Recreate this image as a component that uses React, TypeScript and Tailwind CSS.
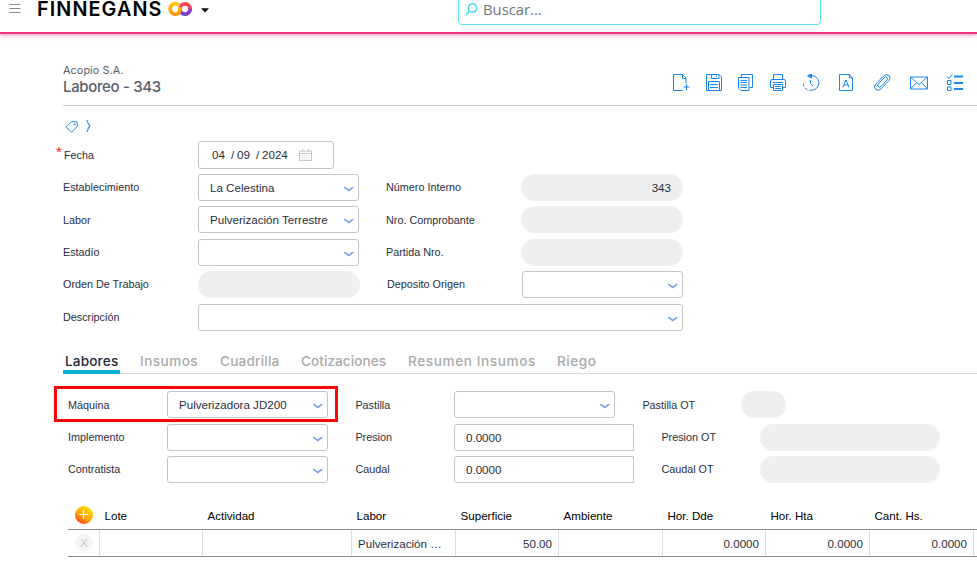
import React from 'react';
import clsx from 'clsx';

interface FieldProps {
  value?: string;
  className?: string;
}

const Chevron: React.FC = () => (
  <svg className="mt-[3px] h-[6px] w-[11px] shrink-0" viewBox="0 0 11 6" fill="none">
    <path d="M1.3 1.2 L5.8 4.4 L10.3 1.2" stroke="#74a3e4" strokeWidth="1.6" />
  </svg>
);

const SelectField: React.FC<FieldProps> = ({ value, className = 'w-[161px]' }) => (
  <div
    className={clsx(
      'flex h-[27px] shrink-0 items-center justify-between rounded-[3px] border border-[#c4c4c4] bg-white pl-[11px] pr-1 text-[11.6px]',
      className
    )}
  >
    <span className="whitespace-nowrap pt-px">{value}</span>
    <Chevron />
  </div>
);

const ReadOnlyField: React.FC<FieldProps> = ({ value, className = 'w-[162px]' }) => (
  <div
    className={clsx(
      'flex h-[27px] shrink-0 items-center justify-end rounded-full bg-[#eeeff1] pr-3 pt-px text-[11.6px]',
      className
    )}
  >
    {value}
  </div>
);

const InputField: React.FC<FieldProps> = ({ value }) => (
  <div className="flex h-[27px] w-[180px] shrink-0 items-center rounded-l-[3px] border border-[#c4c4c4] pl-[11px] pt-px text-[11.6px]">
    {value}
  </div>
);

const Label: React.FC<{ text: string; className?: string }> = ({ text, className }) => (
  <span className={clsx('shrink-0 whitespace-nowrap text-[10.8px]', className)}>{text}</span>
);

const Logo: React.FC = () => (
  <svg className="h-[16px] w-[24px]" viewBox="0 0 24 16" fill="none">
    <defs>
      <linearGradient id="logoWarm" x1="0" y1="0" x2="0" y2="1">
        <stop offset="0" stopColor="#ffc60a" />
        <stop offset="1" stopColor="#ff9408" />
      </linearGradient>
      <linearGradient id="logoCool" x1="0" y1="0" x2="0" y2="1">
        <stop offset="0" stopColor="#ff4a4d" />
        <stop offset="0.4" stopColor="#f0407c" />
        <stop offset="0.65" stopColor="#8b3fc4" />
        <stop offset="1" stopColor="#6f3bd2" />
      </linearGradient>
    </defs>
    <circle cx="17" cy="8" r="5.1" stroke="url(#logoCool)" strokeWidth="3.9" />
    <path
      d="M10.6 3.9 A5.2 5.2 0 1 0 10.6 12 C12 10.8 11.4 8 12.4 6.2"
      stroke="url(#logoWarm)"
      strokeWidth="3.8"
    />
  </svg>
);

const toolbarIcons: { name: string; gap: string; drawing: React.ReactNode }[] = [
  {
    name: 'nuevo',
    gap: 'mr-[15px]',
    drawing: (
      <>
        <path d="M10.5 16.5 H1.5 V.5 H10.5 L14 4 V9" />
        <path d="M10.5 .5 V4.5 H14" />
        <path d="M14.5 10 V16 M11.5 13 H17.5" />
      </>
    ),
  },
  {
    name: 'guardar',
    gap: 'mr-[14px]',
    drawing: (
      <>
        <path d="M1.5 .5 H14 L16.5 3 V16.5 H1.5 Z" />
        <path d="M6.5 .5 V4.5 H14 V.5 M11.5 1.5 V3 M3.5 16.5 V7.5 H14.5 V16.5 M5 10.5 H13 M5 13.5 H13" />
      </>
    ),
  },
  {
    name: 'copiar',
    gap: 'mr-[14px]',
    drawing: (
      <>
        <path d="M1.5 3.5 H12 V16.5 H4 L1.5 14 Z" />
        <path d="M4.5 3 V.5 H15.5 V13.5 H12.5 M3.5 6.5 H10 M3.5 8.5 H10 M3.5 11 H10 M3.5 13.5 H10" />
      </>
    ),
  },
  {
    name: 'imprimir',
    gap: 'mr-[15px]',
    drawing: (
      <>
        <path d="M4.5 5.5 V.5 H13.5 V5.5 M4 13.5 H1.5 V7 Q1.5 5.5 3 5.5 H15 Q16.5 5.5 16.5 7 V13.5 H14" />
        <path d="M4.5 10.5 H13.5 V16.5 H4.5 Z M4 8.5 H14 M6 12.5 H12 M6 14.5 H12" />
      </>
    ),
  },
  {
    name: 'historial',
    gap: 'mr-[18px]',
    drawing: (
      <>
        <path d="M7 1.5 H9 A7.3 7.3 0 0 1 10 16.2" />
        <path d="M10 16.2 A7.3 7.3 0 0 1 1.2 8.5" strokeDasharray="3 1.6" />
        <path d="M9.5 0 V4 L5.5 1.7 Z" fill="#1a86f2" />
        <path d="M8.5 6 V9.5 L11 12" />
      </>
    ),
  },
  {
    name: 'texto',
    gap: 'mr-[17px]',
    drawing: (
      <>
        <path d="M1.5 .5 H11.5 L14.5 4 V16.5 H1.5 Z M11.5 .5 V4 H14.5" />
        <path d="M4.8 13.5 L8 6 L11.2 13.5 M5.8 11 H10.2" />
      </>
    ),
  },
  {
    name: 'adjuntos',
    gap: 'mr-[19px]',
    drawing: (
      <path
        transform="translate(.5 0)"
        d="M13.4 6.2 L7.6 12.4 Q6 13.8 4.7 12.6 Q3.6 11.2 5 9.7 L10.6 3.8 Q12.2 2.6 13.4 3.7 Q14.6 4.9 13.4 6.2 M11.8 10.4 L7.4 15 Q4.7 17.4 2.1 15.4 Q-.3 13 2 10.3 L10.2 1.8 Q13 -.4 15.5 1.5 Q17.7 3.8 15.5 6.6 L11.8 10.4"
      />
    ),
  },
  {
    name: 'correo',
    gap: 'mr-[18px]',
    drawing: (
      <path d="M.5 3 H17.5 V15 H.5 Z M.5 3 L9 10.5 L17.5 3 M.5 15 L6.5 8.5 M17.5 15 L11.5 8.5" />
    ),
  },
  {
    name: 'tareas',
    gap: '',
    drawing: (
      <>
        <path d="M1 2.5 L2.8 4.5 L6.5 .2 M1.5 6.5 H5 V10.5 H1.5 Z M1.5 13 H5 V16.5 H1.5 Z" />
        <path d="M8 2.5 H17 M8 9 H17 M8 15 H17" strokeWidth="1.8" />
      </>
    ),
  },
];

const tabs = [
  { label: 'Labores', width: 'w-[55px]' },
  { label: 'Insumos', width: 'w-[58px] tracking-[0.45px]' },
  { label: 'Cuadrilla', width: 'w-[59px] tracking-[0.2px]' },
  { label: 'Cotizaciones', width: 'w-[85px] tracking-[0.05px]' },
  { label: 'Resumen Insumos', width: 'w-[127px] tracking-[0.6px]' },
  { label: 'Riego', width: 'w-[39px] tracking-[0.5px]' },
];

const columns = [
  { title: 'Lote', value: '', numeric: false },
  { title: 'Actividad', value: '', numeric: false },
  { title: 'Labor', value: 'Pulverización …', numeric: false },
  { title: 'Superficie', value: '50.00', numeric: true },
  { title: 'Ambiente', value: '', numeric: false },
  { title: 'Hor. Dde', value: '0.0000', numeric: true },
  { title: 'Hor. Hta', value: '0.0000', numeric: true },
  { title: 'Cant. Hs.', value: '0.0000', numeric: true },
];

const gridColumns =
  'grid grid-cols-[31px_103px_149px_104px_103px_104px_103px_104px_104px_4px]';

const Header: React.FC = () => (
  <header className="flex h-[34px] shrink-0 border-b-2 border-[#ee327d] shadow-[0_1px_5px_rgba(238,50,125,0.5)]">
    <svg className="ml-[9px] mt-[3px] h-[12px] w-[12px]" viewBox="0 0 12 12" stroke="#8a8a8a">
      <path d="M.5 1.5 H11.5 M.5 5.5 H11.5 M.5 9.5 H11.5" />
    </svg>
    <span className="ml-[16px] w-[131px] whitespace-nowrap font-[Inter] text-[19.8px] font-semibold leading-[18px] tracking-[1.1px] text-black">
      FINNEGANS
    </span>
    <div className="mt-px">
      <Logo />
    </div>
    <svg className="ml-[9px] mt-2 h-[5px] w-[8px]" viewBox="0 0 8 5">
      <path d="M0 .3 H8 L4 4.6 Z" fill="#111" />
    </svg>
    <div className="-mt-3 ml-[249px] flex h-[37px] w-[363px] items-center rounded-[4px] border border-[#5fe2f5] pl-[6px] pt-[4px]">
      <svg className="h-[12px] w-[13px]" viewBox="0 0 13 12" fill="none" stroke="#2ccdea" strokeWidth="1.2">
        <circle cx="7.6" cy="5" r="4.2" />
        <path d="M4.6 8 L1 11.5" />
      </svg>
      <span className="ml-[5px] font-['Open_Sans'] text-[14.8px] leading-5 text-[#6d7680]">Buscar...</span>
    </div>
  </header>
);

const TitleBar: React.FC = () => (
  <div className="ml-[63px] flex h-[72px] justify-between border-b border-[#c9c9c9]">
    <div className="whitespace-nowrap pt-[30px] font-[Inter] text-[#5a5d69]">
      <p className="text-[10.8px] leading-[13px] tracking-[0.1px]">Acopio S.A.</p>
      <h1 className="text-[15px] font-medium leading-[19px] tracking-[-0.35px]">Laboreo - 343</h1>
    </div>
    <div className="flex pr-[13px] pt-[40px]">
      {toolbarIcons.map((icon) => (
        <svg
          key={icon.name}
          className={clsx('h-[17px] w-[18px] shrink-0', icon.gap)}
          viewBox="0 0 18 17"
          fill="none"
          stroke="#1a86f2"
        >
          {icon.drawing}
        </svg>
      ))}
    </div>
  </div>
);

const DateField: React.FC = () => (
  <div className="flex h-[28px] w-[136px] items-center rounded-[3px] border border-[#c4c4c4] pl-[13px] text-[11.6px]">
    <span className="w-[19px]">04</span>
    <span className="w-[6px]">/</span>
    <span className="w-[19px]">09</span>
    <span className="w-[6px]">/</span>
    <span className="w-[37px]">2024</span>
    <svg className="h-[12px] w-[13px]" viewBox="0 0 13 12" fill="none" stroke="#c6c6c6">
      <path d="M.5 2 H12.5 V11.5 H.5 Z M.5 4.5 H12.5 M3.5 0 V3 M9.5 0 V3" />
      <path d="M2.5 6.5 H11 M2.5 8.5 H11 M2.5 10 H11" strokeDasharray="1.2 1" strokeWidth=".8" />
    </svg>
  </div>
);

const FormHeader: React.FC = () => (
  <section className="ml-[63px] w-[620px]">
    <div className="flex h-[35px] gap-[7px] pl-[2px] pt-[14px]">
      <svg className="h-[14px] w-[14px]" viewBox="0 0 14 14" fill="none" stroke="#2b8ef0">
        <path d="M1 7.2 L6.6 1.5 L12 1.8 L12.6 6 L6.8 12.2 Z" />
        <circle cx="9.7" cy="4.4" r=".7" />
      </svg>
      <svg className="-mt-px h-[14px] w-[5px]" viewBox="0 0 5 14" fill="none" stroke="#2b8ef0" strokeWidth="1.2">
        <path d="M1 1 Q1.7 4.5 3.8 7 Q1.7 9.5 1 13" />
      </svg>
    </div>
    <div className="flex h-[33px]">
      <div className="-ml-[7px] flex h-[28px] w-[142px]">
        <span className="w-[8px] pt-[2px] text-[15px] leading-[18px] text-[#f01818]">*</span>
        <Label text="Fecha" className="self-center" />
      </div>
      <DateField />
    </div>
    <div className="flex h-[32px]">
      <Label text="Establecimiento" className="w-[135px] leading-[27px]" />
      <SelectField value="La Celestina" />
      <Label text="Número Interno" className="ml-[27px] w-[135px] leading-[27px]" />
      <ReadOnlyField value="343" />
    </div>
    <div className="flex h-[33px]">
      <Label text="Labor" className="w-[135px] leading-[28px]" />
      <SelectField value="Pulverización Terrestre" />
      <Label text="Nro. Comprobante" className="ml-[27px] w-[135px] leading-[28px]" />
      <ReadOnlyField />
    </div>
    <div className="flex h-[32px]">
      <Label text="Estadío" className="w-[135px] leading-[27px]" />
      <SelectField />
      <Label text="Partida Nro." className="ml-[27px] w-[135px] leading-[27px]" />
      <ReadOnlyField />
    </div>
    <div className="flex h-[33px]">
      <Label text="Orden De Trabajo" className="w-[135px] leading-[27px]" />
      <ReadOnlyField />
      <Label text="Deposito Origen" className="ml-[27px] w-[135px] leading-[27px]" />
      <SelectField />
    </div>
    <div className="flex h-[32px]">
      <Label text="Descripción" className="w-[135px] leading-[27px]" />
      <SelectField className="w-[485px]" />
    </div>
  </section>
);

const Tabs: React.FC = () => (
  <nav className="ml-[63px] mt-[14px] flex h-[24px] border-b border-[#d6d6d6] font-[Inter] text-[13.6px] font-medium">
    {tabs.map((tab, index) => (
      <div
        key={tab.label}
        className={clsx(
          'h-[24px] whitespace-nowrap leading-[23px]',
          index === 0
            ? 'mr-[20px] w-[57px] border-b-4 border-[#0badd1] pl-[2px] tracking-[0.15px] text-[#23273a]'
            : `mr-[22px] text-[#a9a9a9] ${tab.width}`
        )}
      >
        {tab.label}
      </div>
    ))}
  </nav>
);

const LaborForm: React.FC = () => (
  <section className="ml-[54px] mt-[12px]">
    <div className="flex h-[36px]">
      <div className="flex h-[36px] w-[284px] border-[3px] border-[#f80808] pl-[11px] pt-[2px]">
        <Label text="Máquina" className="w-[99px] leading-[28px]" />
        <SelectField value="Pulverizadora JD200" />
      </div>
      <div className="flex pt-[5px]">
        <Label text="Pastilla" className="ml-[17.4px] w-[98.6px] leading-[28px]" />
        <SelectField />
        <Label text="Pastilla OT" className="ml-[27.4px] w-[98.6px] leading-[28px]" />
        <ReadOnlyField className="w-[45px]" />
      </div>
    </div>
    <div className="ml-[14px] mt-[2px] flex h-[32px]">
      <Label text="Implemento" className="w-[99px] leading-[27px]" />
      <SelectField />
      <Label text="Presion" className="ml-[27.4px] w-[98.6px] leading-[27px]" />
      <InputField value="0.0000" />
      <Label text="Presion OT" className="ml-[27.4px] w-[98.6px] leading-[27px]" />
      <ReadOnlyField className="w-[180px]" />
    </div>
    <div className="ml-[14px] flex h-[32px]">
      <Label text="Contratista" className="w-[99px] leading-[27px]" />
      <SelectField />
      <Label text="Caudal" className="ml-[27.4px] w-[98.6px] leading-[27px]" />
      <InputField value="0.0000" />
      <Label text="Caudal OT" className="ml-[27.4px] w-[98.6px] leading-[27px]" />
      <ReadOnlyField className="w-[180px]" />
    </div>
  </section>
);

const LaborTable: React.FC = () => (
  <section className="ml-[68px] mt-[14px] text-[11.6px]">
    <div className={clsx(gridColumns, 'h-[28px] border-b border-[#8c8c8c] text-black')}>
      <div className="pl-[7px] pt-[4px]">
        <div className="flex h-[18px] w-[18px] items-center justify-center rounded-full bg-[linear-gradient(35deg,#ff2a2a_5%,#ff9d00_40%,#ffe400_90%)]">
          <svg className="-ml-px -mt-px h-[9px] w-[9px]" viewBox="0 0 9 9" stroke="#fff" strokeWidth="1.2">
            <path d="M4.5 0 V9 M0 4.5 H9" />
          </svg>
        </div>
      </div>
      {columns.map((column) => (
        <div key={column.title} className="whitespace-nowrap pl-[5.5px] leading-[27px]">
          {column.title}
        </div>
      ))}
    </div>
    <div className={clsx(gridColumns, 'h-[27px] border-b border-[#8c8c8c]')}>
      <div className="pl-[7px] pt-[4px]">
        <div className="flex h-[18px] w-[18px] items-center justify-center rounded-full bg-[#f4f5f7] text-[#c4c6ca]">
          X
        </div>
      </div>
      {columns.map((column) => (
        <div
          key={column.title}
          className={clsx(
            'h-[26px] whitespace-nowrap border-l border-[#dedede] leading-[27px]',
            column.numeric ? 'pr-[6px] text-right' : 'pl-[6px]'
          )}
        >
          {column.value}
        </div>
      ))}
      <div className="h-[26px] border-l border-[#dedede]" />
    </div>
  </section>
);

export default function App() {
  return (
    <main className="flex h-[579px] w-[977px] flex-col overflow-hidden bg-white font-['Liberation_Sans',Arial,sans-serif] text-[#2a2d40]">
      <Header />
      <TitleBar />
      <FormHeader />
      <Tabs />
      <LaborForm />
      <LaborTable />
    </main>
  );
}
